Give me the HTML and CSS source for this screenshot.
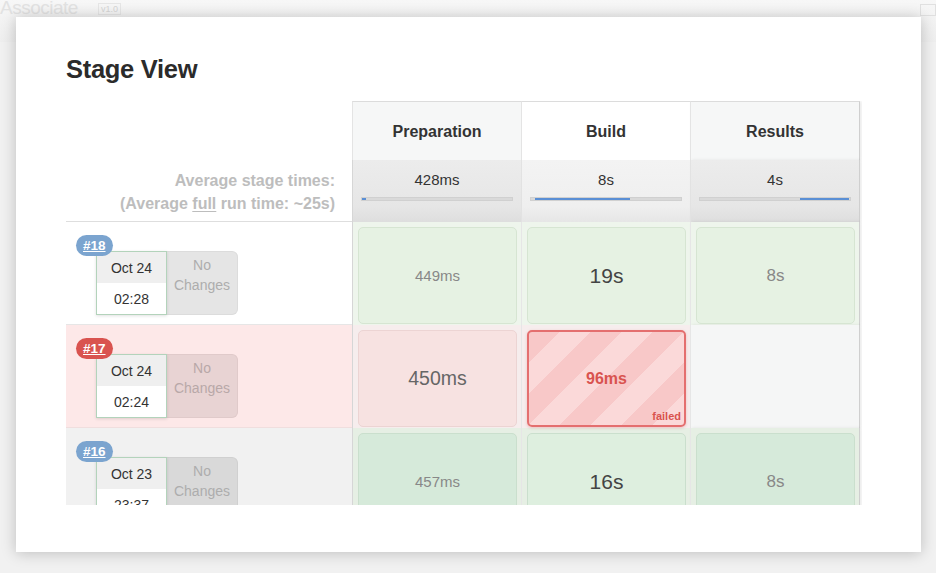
FILE: index.html
```html
<!DOCTYPE html>
<html>
<head>
<meta charset="utf-8">
<link rel="stylesheet" href="styles.css">
</head>
<body>
<div class="topbar"><span class="brand">Associate</span><span class="ver">v1.0</span><span class="sq"></span></div>
<main class="card">
  <h2 class="title">Stage View</h2>
  <div class="sv">
    <div class="lh"></div>
    <div class="sh">Preparation</div>
    <div class="sh hot">Build</div>
    <div class="sh last">Results</div>

    <div class="la">Average stage times:<br>(Average <u>full</u> run time: ~25s)</div>
    <div class="avg"><div class="at">428ms</div><div class="bar"><i style="margin-left:0;width:4px"></i></div></div>
    <div class="avg hot"><div class="at">8s</div><div class="bar"><i style="margin-left:4px;width:95px"></i></div></div>
    <div class="avg last"><div class="at">4s</div><div class="bar"><i style="margin-left:100px;width:49px"></i></div></div>

    <div class="run ok">
      <a class="badge">#18</a>
      <div class="chg"><div class="dt"><span class="d">Oct 24</span><span class="t">02:28</span></div><div class="nc">No<br>Changes</div></div>
    </div>
    <div class="cell g"><div class="box s15 grey">449ms</div></div>
    <div class="cell g hot"><div class="box s21">19s</div></div>
    <div class="cell g last"><div class="box s17 grey">8s</div></div>

    <div class="run bad">
      <a class="badge red">#17</a>
      <div class="chg"><div class="dt"><span class="d">Oct 24</span><span class="t">02:24</span></div><div class="nc">No<br>Changes</div></div>
    </div>
    <div class="cell r"><div class="box s19 mid">450ms</div></div>
    <div class="cell r hot"><div class="box fail">96ms<span class="fl">failed</span></div></div>
    <div class="cell e last"></div>

    <div class="run old">
      <a class="badge">#16</a>
      <div class="chg"><div class="dt"><span class="d">Oct 23</span><span class="t">23:37</span></div><div class="nc">No<br>Changes</div></div>
    </div>
    <div class="cell g2"><div class="box s15 grey">457ms</div></div>
    <div class="cell g2 hot"><div class="box s21">16s</div></div>
    <div class="cell g2 last"><div class="box s17 grey">8s</div></div>
  </div>
</main>
</body>
</html>
```
FILE: styles.css
```css
* { box-sizing: border-box; }
html, body { margin: 0; height: 100%; }
body {
  background: #f1f1f1;
  font-family: "Liberation Sans", Arial, sans-serif;
  color: #333;
  overflow: hidden;
}
.topbar {
  height: 42px;
  background: linear-gradient(#f7f7f7, #eeeeee);
  display: flex;
  align-items: flex-start;
  gap: 10px;
}
.brand {
  font-size: 19px;
  color: #e2e2e2;
  line-height: 14px;
  margin-top: 1px;
  letter-spacing: -0.5px;
}
.ver {
  font-size: 9px;
  color: #d6d6d6;
  border: 1px solid #e6e6e6;
  padding: 0 2px;
  margin-top: 3px;
  margin-left: 10px;
}
.sq {
  margin-left: auto;
  margin-top: 4px;
  width: 16px;
  height: 12px;
  border: 1px solid #e0e0e0;
}
.card {
  position: absolute;
  left: 16px;
  top: 17px;
  width: 905px;
  height: 535px;
  background: #fff;
  box-shadow: 0 1px 14px rgba(0,0,0,.22);
  padding: 42px 0 0 50px;
}
.title {
  margin: 0;
  font-size: 25.5px;
  line-height: 20px;
  font-weight: bold;
  color: #2b2b2b;
  letter-spacing: -0.3px;
}
.sv {
  margin-top: 22px;
  display: grid;
  grid-template-columns: 286px 169px 169px 170px;
  grid-template-rows: 59px 62px 103px 103px 103px;
  height: 404px;
  overflow: hidden;
  width: 796px;
}
.lh { background: #fff; }
.sh {
  background: #f6f7f7;
  border-top: 1px solid #dcdcdc;
  border-left: 1px solid #e4e4e4;
  display: flex;
  align-items: center;
  justify-content: center;
  font-weight: bold;
  font-size: 16px;
  color: #333;
  padding-top: 2px;
}
.sh.hot { background: #fff; }
.sh.last, .avg.last, .cell.last {
  border-right: 1px solid #cfcfcf;
  box-shadow: 2px 0 3px rgba(0,0,0,.08);
}
.sh:first-of-type { border-left: 1px solid #d6d6d6; }
.la {
  background: #fff;
  border-bottom: 1px solid #dedede;
  box-shadow: 0 2px 3px rgba(0,0,0,.05);
  text-align: right;
  padding: 9px 17px 0 0;
  font-weight: bold;
  font-size: 16px;
  line-height: 23px;
  color: #bdbdbd;
}
.la u { text-decoration-thickness: 1px; text-underline-offset: 2px; }
.avg {
  background: linear-gradient(#ececec, #e6e6e6 75%, #dedede);
  border-left: 1px solid #e2e2e2;
  padding: 11px 8px 0 8px;
  text-align: center;
}
.avg:nth-child(6) { border-left-color: #d6d6d6; }
.avg.hot { background: linear-gradient(#f3f3f3, #efefef 75%, #e6e6e6); }
.at { font-size: 15px; line-height: 18px; color: #333; }
.bar {
  margin-top: 8px;
  height: 4px;
  background: #d9d9d9;
  border: 1px solid #d0d0d0;
  display: flex;
}
.bar i { display: block; height: 100%; background: #5a8fd5; }

.run {
  border-bottom: 1px solid #e6e6e6;
  padding: 13px 0 0 10px;
}
.run.ok { background: #fff; }
.run.bad { background: #fde8e8; border-bottom-color: #f0dede; }
.run.old { background: #f1f1f1; }
.badge {
  position: relative;
  z-index: 1;
  display: inline-block;
  height: 21px;
  padding: 0 7px;
  border-radius: 11px;
  background: #7ba4cf;
  color: #fff;
  font-weight: bold;
  font-size: 13.5px;
  line-height: 21px;
  text-decoration: underline;
  text-decoration-thickness: 1px;
}
.badge.red { background: #d9534f; }
.chg {
  display: flex;
  margin: -5px 0 0 20px;
}
.dt {
  width: 71px;
  height: 64px;
  border: 1px solid #b3d3bb;
  background: #fff;
  display: flex;
  flex-direction: column;
  box-shadow: 0 1px 3px rgba(0,0,0,.12);
  position: relative;
  z-index: 0;
}
.dt span {
  flex: 1;
  display: flex;
  align-items: center;
  justify-content: center;
  font-size: 14px;
  color: #333;
}
.dt .d { background: #efefef; }
.nc {
  width: 71px;
  height: 64px;
  background: #e5e5e5;
  border-radius: 0 6px 6px 0;
  border: 1px solid #dcdcdc;
  border-left: none;
  text-align: center;
  font-size: 14px;
  line-height: 20px;
  color: #adadad;
  padding-top: 3px;
}
.bad .nc { background: #e8d3d3; border-color: #e0caca; color: #b8a8a8; }
.old .nc { background: #d9d9d9; border-color: #d0d0d0; }

.cell {
  padding: 5px 4px 1px 5px;
  border-left: 1px solid #e6e6e6;
}
.cell:nth-child(4n+2) { border-left-color: #d6d6d6; }
.cell.g { background: #eef5ec; }
.cell.r { background: #f6eded; }
.cell.e { background: #f5f6f6; }
.cell.g2 { background: #e6efe4; }
.box {
  height: 97px;
  border-radius: 5px;
  display: flex;
  align-items: center;
  justify-content: center;
  color: #444;
  position: relative;
}
.g .box { background: #e6f2e3; border: 1px solid #d6e5d2; }
.g2 .box { background: #d6eada; border: 1px solid #cadfcd; }
.g2.hot .box { background: #deefdf; }
.r .box { background: #f7e2e1; border: 1px solid #ecd4d3; }
.s15 { font-size: 15px; }
.s17 { font-size: 17px; }
.s19 { font-size: 19.5px; }
.s21 { font-size: 21px; }
.grey { color: #888; }
.mid { color: #666; }
.r .box.fail {
  border: 2px solid #e46f6f;
  background: repeating-linear-gradient(-45deg, #fbd9d9 0 22px, #f8c8c8 22px 44px);
  color: #d9534f;
  font-weight: bold;
  font-size: 16px;
  box-shadow: 0 1px 3px rgba(200,60,60,.25);
}
.fl {
  position: absolute;
  right: 3px;
  bottom: 3px;
  font-size: 11px;
  line-height: 11px;
  color: #d9534f;
}
```
